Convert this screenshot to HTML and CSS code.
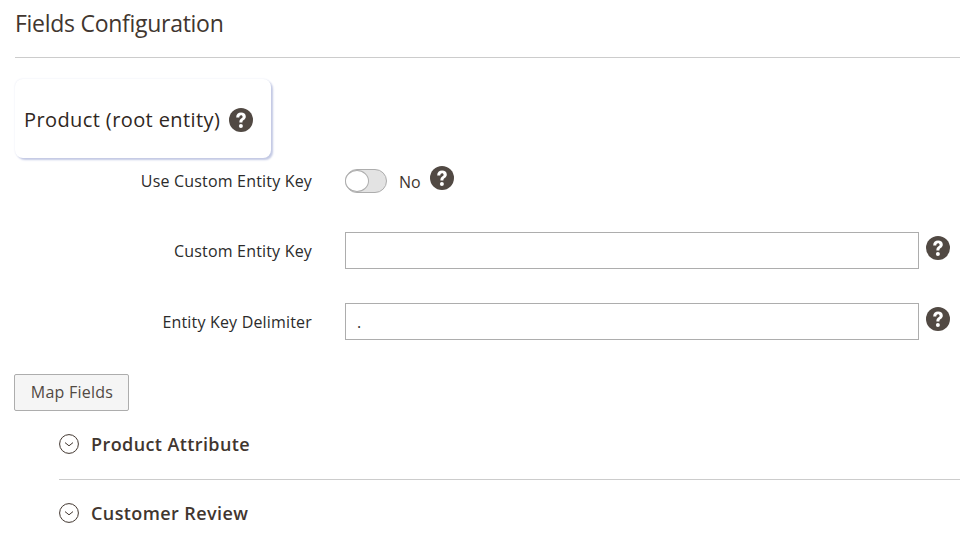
FILE: index.html
```html
<!DOCTYPE html>
<html lang="en">
<head>
<meta charset="utf-8">
<title>Fields Configuration</title>
<link rel="stylesheet" href="styles.css">
</head>
<body>
<svg class="defs" width="0" height="0" aria-hidden="true">
  <symbol id="help" viewBox="0 0 24 24">
    <circle cx="12" cy="12" r="12" fill="#514943"/>
    <path d="M7.2 9.4c0-3.1 2-4.9 4.9-4.9 2.8 0 4.7 1.6 4.7 4 0 1.7-.9 2.7-2.1 3.6-1 .8-1.3 1.2-1.3 2.4h-3c0-2 .5-2.9 1.8-3.9 1-.8 1.4-1.2 1.4-1.9 0-.9-.6-1.5-1.5-1.5-1 0-1.7.8-1.8 2.4z" fill="#fff"/>
    <circle cx="11.9" cy="18" r="2" fill="#fff"/>
  </symbol>
  <symbol id="chev" viewBox="0 0 20 20">
    <circle cx="10" cy="10" r="9.4" fill="none" stroke="#41362f" stroke-width="1"/>
    <path d="M6 8.6l4 3.2 4-3.2" fill="none" stroke="#41362f" stroke-width="1"/>
  </symbol>
</svg>
<main class="page">
  <h1 class="title">Fields Configuration</h1>
  <div class="card">
    <span class="card-label">Product (root entity)</span>
    <svg class="help"><use href="#help"/></svg>
  </div>
  <div class="row row-toggle">
    <label class="label">Use Custom Entity Key</label>
    <div class="control">
      <span class="toggle"><span class="knob"></span></span>
      <span class="toggle-text">No</span>
      <svg class="help help-toggle"><use href="#help"/></svg>
    </div>
  </div>
  <div class="row row-key">
    <label class="label">Custom Entity Key</label>
    <div class="control">
      <input class="input" type="text" value="">
      <svg class="help"><use href="#help"/></svg>
    </div>
  </div>
  <div class="row row-delim">
    <label class="label">Entity Key Delimiter</label>
    <div class="control">
      <input class="input" type="text" value=".">
      <svg class="help"><use href="#help"/></svg>
    </div>
  </div>
  <button class="button" type="button">Map Fields</button>
  <section class="sections">
    <div class="section section-first">
      <svg class="chev"><use href="#chev"/></svg>
      <span class="section-title">Product Attribute</span>
    </div>
    <div class="section">
      <svg class="chev"><use href="#chev"/></svg>
      <span class="section-title">Customer Review</span>
    </div>
  </section>
</main>
</body>
</html>
```
FILE: styles.css
```css
* { box-sizing: border-box; }
html, body { margin: 0; padding: 0; }
body {
  width: 960px;
  height: 542px;
  overflow: hidden;
  background: #fff;
  color: #41362f;
  font-family: "Open Sans", sans-serif;
  font-size: 14px;
}
.defs { position: absolute; }
.page { padding-left: 15px; }
.title {
  margin: 0;
  height: 58px;
  padding-top: 7px;
  border-bottom: 1px solid #cccccc;
  font-size: 23px;
  line-height: 32px;
  font-weight: 400;
  letter-spacing: -.28px;
  color: #41362f;
}
.card {
  display: flex;
  align-items: center;
  width: 256px;
  height: 79px;
  margin-top: 21px;
  padding: 2px 0 0 9px;
  border-radius: 8px;
  background: #fff;
  box-shadow: 2px 2px 2px #c3c9e4, 0 0 2px #e3e6f2;
}
.card-label {
  font-size: 20px;
  font-weight: 500;
  letter-spacing: .4px;
  line-height: 24px;
  color: #2f2722;
}
.help { display: block; flex: none; width: 24px; height: 24px; }
.card .help { margin-left: 9px; }
.row { display: flex; align-items: center; }
.label {
  width: 297px;
  text-align: right;
  font-size: 16px;
  font-weight: 500;
  letter-spacing: .18px;
  color: #2b2b2b;
}
.control {
  display: flex;
  align-items: center;
  margin-left: 33px;
}
.row-toggle { height: 44px; margin-top: 1px; }
.row-key { height: 37px; margin-top: 29px; }
.row-delim { height: 37px; margin-top: 34px; }
.toggle {
  display: block;
  width: 42px;
  height: 24px;
  border: 1px solid #adadad;
  border-radius: 12px;
  background: #e3e3e3;
}
.knob {
  display: block;
  width: 24px;
  height: 22px;
  border: 1px solid #adadad;
  border-radius: 50%;
  margin-left: -1px;
  background: #fff;
}
.toggle-text { margin-left: 12px; padding-top: 2px; font-size: 16px; color: #41362f; }
.help-toggle { margin-left: 9px; margin-top: -6px; }
.input {
  display: block;
  width: 574px;
  height: 37px;
  padding: 0 11px;
  border: 1px solid #adadad;
  border-radius: 0;
  outline: 0;
  background: #fff;
  color: #303030;
  font-family: "Open Sans", sans-serif;
  font-size: 16px;
}
.input + .help { margin-left: 7px; margin-top: -5px; }
.button {
  display: block;
  width: 115px;
  height: 37px;
  margin-top: 34px;
  margin-left: -1px;
  padding: 0 0 1px 1px;
  border: 1px solid #adadad;
  border-radius: 2px;
  background: #f5f5f5;
  color: #514943;
  font-family: "Open Sans", sans-serif;
  font-size: 16px;
  font-weight: 500;
  letter-spacing: .25px;
}
.sections { margin-left: 44px; }
.section { display: flex; align-items: center; height: 68px; }
.section-first { height: 69px; padding-bottom: 1px; border-bottom: 1px solid #cccccc; }
.chev { display: block; flex: none; width: 20px; height: 20px; margin-top: -2px; }
.section-title {
  margin-left: 12px;
  padding-bottom: 2px;
  font-size: 18px;
  font-weight: 600;
  letter-spacing: .4px;
}
```
